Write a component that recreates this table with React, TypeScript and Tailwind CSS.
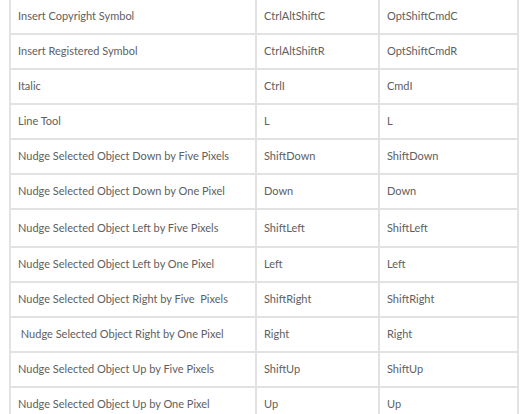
const rows: { action: string; win: string; mac: string; tall?: boolean }[] = [
  { action: 'Insert Copyright Symbol', win: 'CtrlAltShiftC', mac: 'OptShiftCmdC' },
  { action: 'Insert Registered Symbol', win: 'CtrlAltShiftR', mac: 'OptShiftCmdR' },
  { action: 'Italic', win: 'CtrlI', mac: 'CmdI' },
  { action: 'Line Tool', win: 'L', mac: 'L' },
  { action: 'Nudge Selected Object Down by Five Pixels', win: 'ShiftDown', mac: 'ShiftDown' },
  { action: 'Nudge Selected Object Down by One Pixel', win: 'Down', mac: 'Down' },
  { action: 'Nudge Selected Object Left by Five Pixels', win: 'ShiftLeft', mac: 'ShiftLeft', tall: true },
  { action: 'Nudge Selected Object Left by One Pixel', win: 'Left', mac: 'Left' },
  { action: 'Nudge Selected Object Right by Five  Pixels', win: 'ShiftRight', mac: 'ShiftRight' },
  { action: ' Nudge Selected Object Right by One Pixel', win: 'Right', mac: 'Right' },
  { action: 'Nudge Selected Object Up by Five Pixels', win: 'ShiftUp', mac: 'ShiftUp' },
  { action: 'Nudge Selected Object Up by One Pixel', win: 'Up', mac: 'Up' },
];

function App() {
  return (
    <div className="w-[526px] h-[414px] overflow-hidden bg-white">
      <table
        className="ml-[9px] mt-[-2px] w-[508px] table-fixed border-collapse text-[11px] text-[#606060] whitespace-pre"
        style={{ fontFamily: 'Lato, "Open Sans", sans-serif' }}
      >
        <colgroup>
          <col className="w-[246px]" />
          <col className="w-[123px]" />
          <col className="w-[139px]" />
        </colgroup>
        <tbody>
          {rows.map((row) => (
            <tr key={row.action} className={row.tall ? 'h-[38px]' : 'h-[35px]'}>
              <td className="border-2 border-[#e2e2e2] px-[7px] py-0 align-middle">{row.action}</td>
              <td className="border-2 border-[#e2e2e2] px-[7px] py-0 align-middle">{row.win}</td>
              <td className="border-2 border-[#e2e2e2] px-[7px] py-0 align-middle">{row.mac}</td>
            </tr>
          ))}
        </tbody>
      </table>
    </div>
  );
}

export default App;
